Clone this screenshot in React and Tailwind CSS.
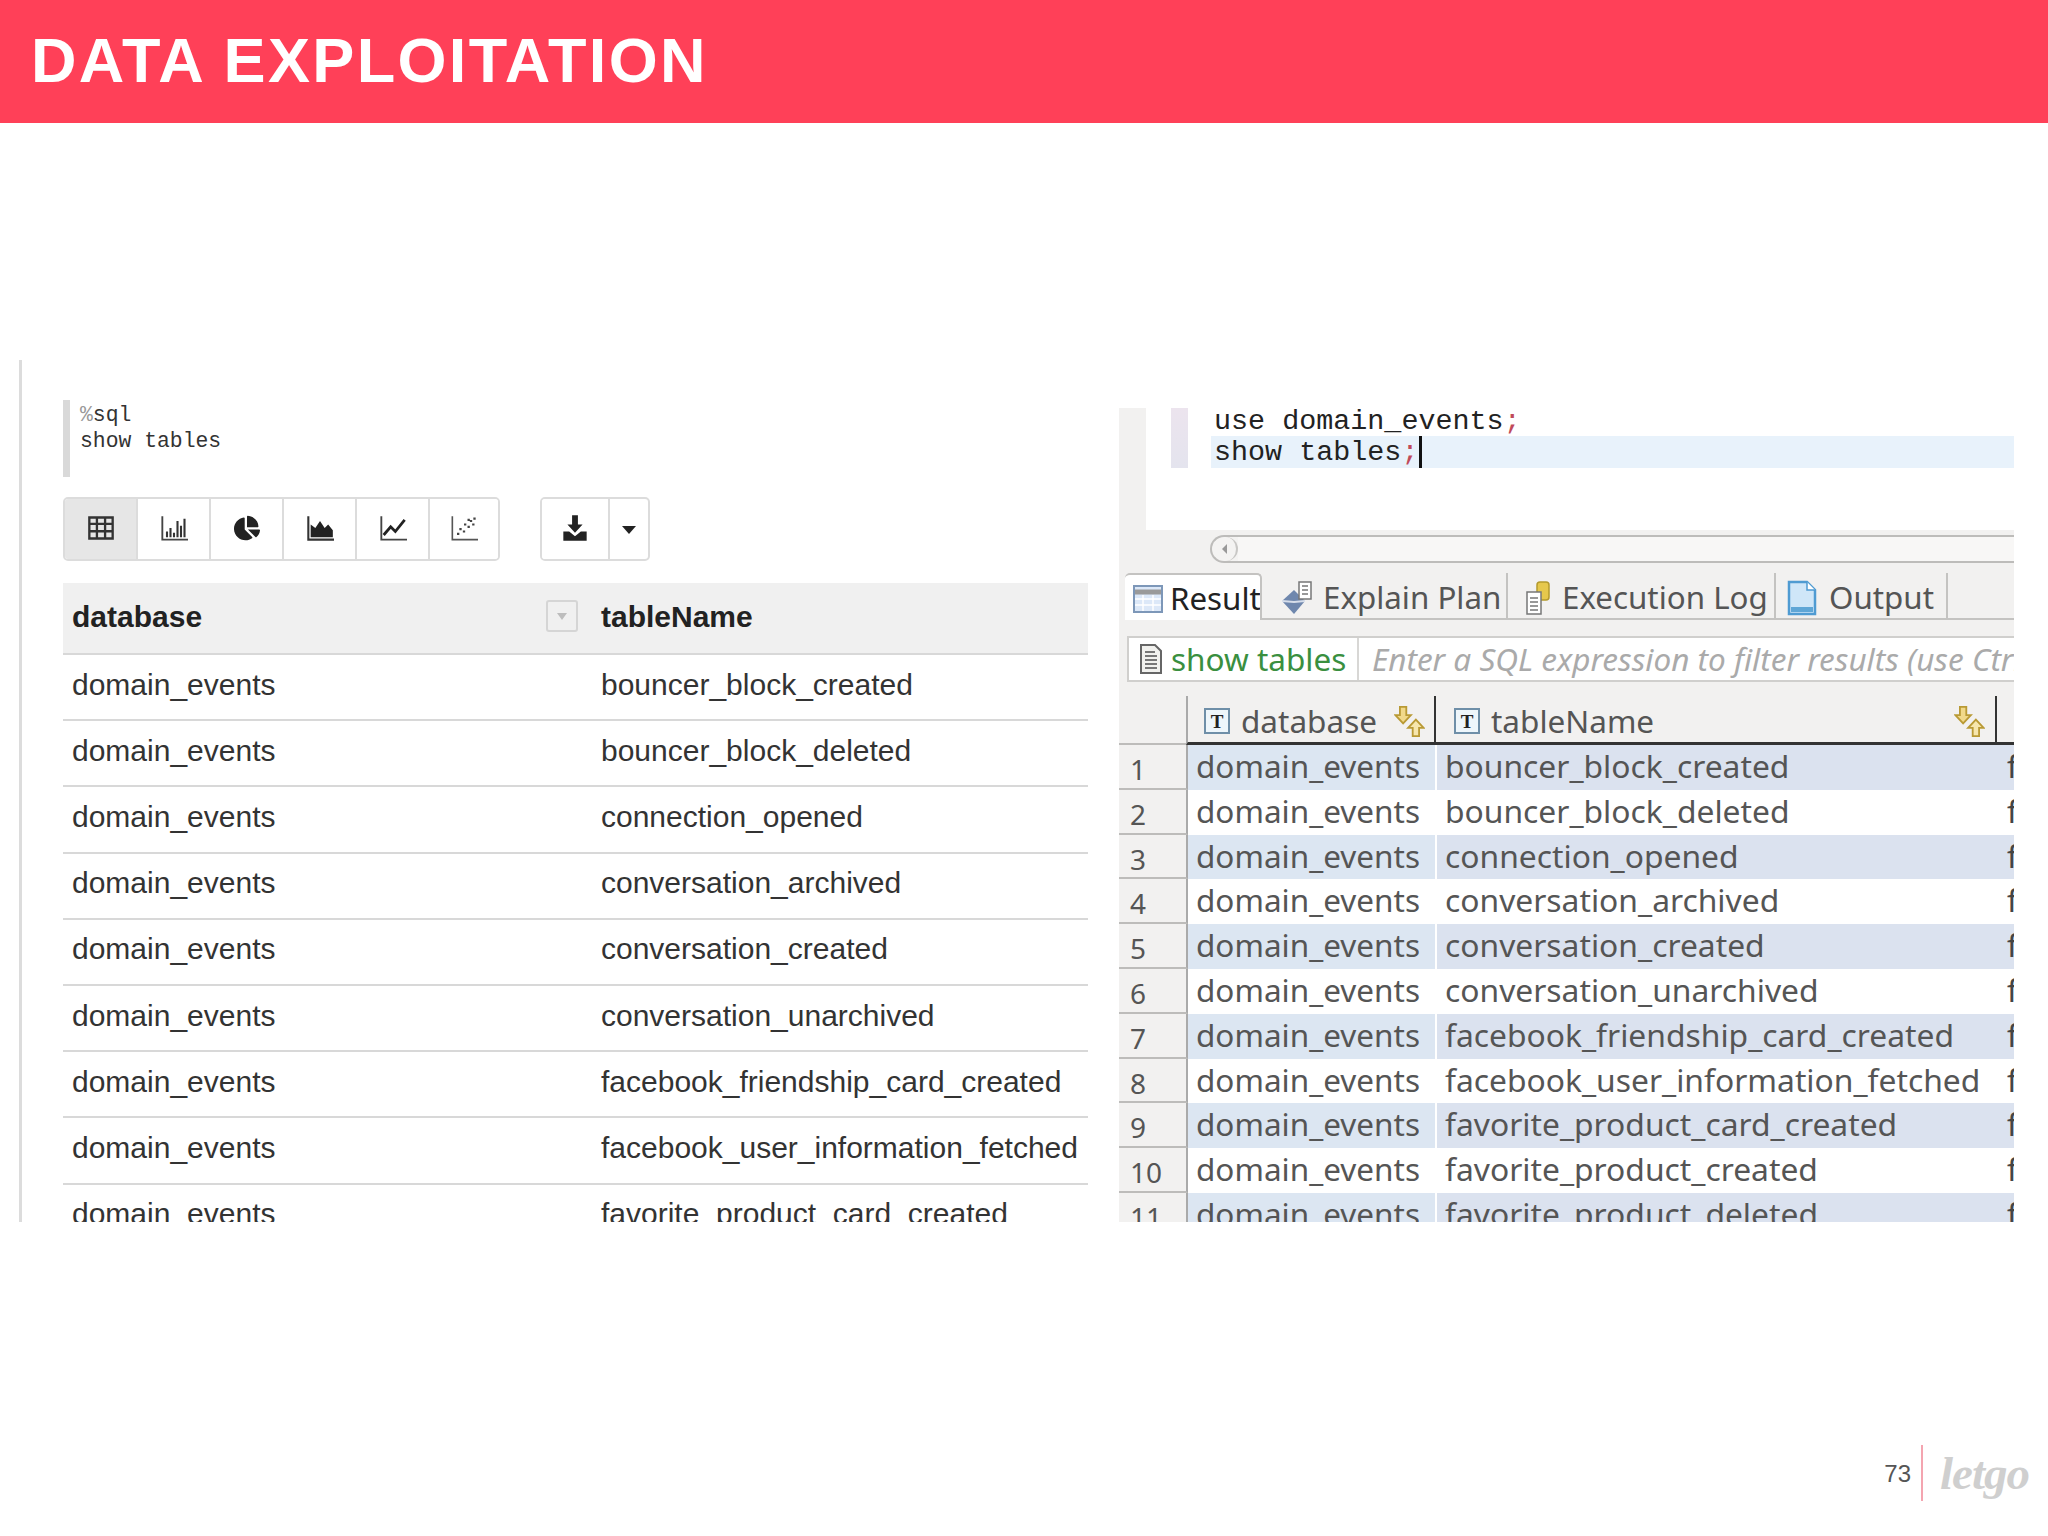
import React from "react";
import { FaChartPie } from "react-icons/fa";

const tables = ["bouncer_block_created","bouncer_block_deleted","connection_opened","conversation_archived","conversation_created","conversation_unarchived","facebook_friendship_card_created","facebook_user_information_fetched","favorite_product_card_created"];
const tablesR = [...tables, "favorite_product_created", "favorite_product_deleted"];

const S = ({ children, w = 28, h = 28, vb = "0 0 24 24" }) => (
  <svg width={w} height={h} viewBox={vb} className="shrink-0">{children}</svg>
);

const IconTable = () => (
  <S><path d="M2 3h20v18H2zM2 8.5h20M2 14.800h20M8.500 3v18M15.500 3v18" fill="none" stroke="#333" strokeWidth="2" /></S>
);
const IconBars = () => (
  <S><path d="M2 2v20h22" fill="none" stroke="#444" strokeWidth="1.600" /><path d="M6 15v5M9 12v8M12 16v4M15 6v14M18 10v10M21 4v16" stroke="#333" strokeWidth="1.800" /></S>
);
const IconArea = () => (
  <S><path d="M2 2v20h22" fill="none" stroke="#333" strokeWidth="1.800" /><path d="M4 20V9l4 3 4-6 4 6 3-3 4 5v6z" fill="#222" /></S>
);
const IconLine = () => (
  <S><path d="M2 2v20h22" fill="none" stroke="#444" strokeWidth="1.600" /><path d="M4 18l6-7 4 4 8-10" fill="none" stroke="#222" strokeWidth="2.400" /></S>
);
const IconScatter = () => (
  <S><path d="M2 2v20h22" fill="none" stroke="#555" strokeWidth="1.400" /><path d="M6 17h2M8 13h2M11 15h2M12 9h2M15 11h2M17 6h2M20 4h2M15 5h2M19 9h2" stroke="#444" strokeWidth="1.800" /></S>
);
const IconDownload = () => (
  <S><path d="M9.500 1h5v8h4L12 16 5.500 9h4z" fill="#222" /><path d="M2 15h5l5 4 5-4h5v8H2z" fill="#222" /></S>
);

const ToolBtn = ({ active, children, last, w = "w-[73px]" }) => (
  <div className={`${w} h-full flex items-center justify-center pb-[2px] ${active ? "bg-[#e6e6e6]" : "bg-white"} ${last ? "flex-1" : "border-r-2 border-[#dcdcdc]"}`}>
    {children}
  </div>
);

const ResultIcon = () => (
  <S w={30} h={30} vb="0 0 30 30">
    <rect x="1" y="2" width="28" height="26" fill="#dce8f8" stroke="#7d97b8" strokeWidth="2" />
    <path d="M2 8h26" stroke="#9a9a9a" strokeWidth="5" />
    <path d="M2 15h26M2 21h26M10 11v16M20 11v16" stroke="#fff" strokeWidth="1.500" />
  </S>
);
const PlanIcon = () => (
  <S w={32} h={34} vb="0 0 32 34">
    <path d="M1 20L13 9l11 11-11 13z" fill="#6f87ad" />
    <path d="M1 20l12 1 11-1" stroke="#d7deea" strokeWidth="2" fill="none" />
    <rect x="18" y="1" width="12" height="17" fill="#fff" stroke="#777" strokeWidth="1.500" />
    <path d="M21 5h6M21 9h6M21 13h6" stroke="#777" strokeWidth="1.500" />
  </S>
);
const LogIcon = () => (
  <S w={26} h={34} vb="0 0 26 34">
    <rect x="12" y="1" width="12" height="18" rx="3" fill="#e6c84c" stroke="#b49a2d" strokeWidth="1.500" />
    <rect x="2" y="11" width="14" height="22" fill="#fff" stroke="#777" strokeWidth="1.500" />
    <path d="M5 17h8M5 21h8M5 25h8M5 29h8" stroke="#777" strokeWidth="1.500" />
  </S>
);
const OutputIcon = () => (
  <S w={30} h={36} vb="0 0 30 36">
    <path d="M2 2h18l8 8v24H2z" fill="#cfe6f8" stroke="#4f9bd2" strokeWidth="2.500" />
    <path d="M4 27h22v5H4z" fill="#5fa6d6" />
    <path d="M20 2v8h8" fill="#fff" stroke="#4f9bd2" strokeWidth="1.500" />
  </S>
);
const DocIcon = () => (
  <S w={24} h={30} vb="0 0 24 30">
    <path d="M2 1h14l6 6v22H2z" fill="#f1f1ee" stroke="#666" strokeWidth="2" />
    <path d="M6 8h10M6 12h12M6 16h12M6 20h12M6 24h12" stroke="#777" strokeWidth="1.800" />
  </S>
);
const TIcon = () => (
  <div className="w-[26px] h-[26px] shrink-0 border-2 border-[#6f8fa8] bg-[#eef6fb] flex items-center justify-center text-[#222] text-[19px] font-bold font-['Liberation_Serif',serif] leading-none">
    T
  </div>
);
const SortIcon = () => (
  <S w={31} h={31} vb="0 0 33 34">
    <path d="M6 1h7v9h5l-8.500 9L1 10h5z" fill="#f1d98a" stroke="#b99a35" strokeWidth="2" />
    <path d="M20 33v-9h-5l8.500-9L32 24h-5v9z" fill="#f6e6ad" stroke="#b99a35" strokeWidth="2" />
  </S>
);

const Tab = ({ icon, label, cls }) => (
  <div className={`h-full flex items-center border-b-2 border-r-2 border-[#c4c3c1] pt-[4px] whitespace-nowrap ${cls}`}>
    {icon}
    <span className="text-[#555] text-[31.300px] leading-none">{label}</span>
  </div>
);

export default function App() {
  return (
    <div className="w-[2048px] h-[1536px] bg-white overflow-hidden flex flex-col font-['Liberation_Sans',sans-serif]">
      <header className="h-[123px] bg-[#ff4058] flex items-center pl-[31px] shrink-0">
        <h1 className="text-white font-bold text-[63px] leading-none tracking-[2.350px] pb-[2px]">DATA EXPLOITATION</h1>
      </header>

      <main className="mt-[237px] h-[862px] flex shrink-0">
        {/* Left notebook */}
        <section className="ml-[19px] w-[1069px] border-l-[3px] border-[#dcdcdc] overflow-hidden pl-[41px] pt-[40px]">
          <div className="h-[77px] border-l-[7px] border-[#d9d9d9] pl-[10px] pt-[2px] font-['Liberation_Mono',monospace] text-[21.400px] leading-[26px] text-[#333]">
            <div><span className="text-[#999]">%</span>sql</div>
            <div>show tables</div>
          </div>
          <div className="mt-[20px] flex h-[64px] gap-[40px]">
            <div className="w-[437px] flex border-2 border-[#dcdcdc] rounded-[5px] overflow-hidden">
              <ToolBtn active><IconTable /></ToolBtn>
              <ToolBtn><IconBars /></ToolBtn>
              <ToolBtn><FaChartPie size={26} color="#222" /></ToolBtn>
              <ToolBtn><IconArea /></ToolBtn>
              <ToolBtn><IconLine /></ToolBtn>
              <ToolBtn last w=""><IconScatter /></ToolBtn>
            </div>
            <div className="w-[110px] flex border-2 border-[#dcdcdc] rounded-[5px] overflow-hidden">
              <ToolBtn w="w-[68px]"><IconDownload /></ToolBtn>
              <div className="flex-1 flex items-center justify-center">
                <div className="w-0 h-0 border-l-[7px] border-r-[7px] border-t-[8px] border-l-transparent border-r-transparent border-t-[#222] mt-[2px]" />
              </div>
            </div>
          </div>
          <div className="mt-[22px] w-[1025px]">
            <div className="h-[72px] bg-[#f0f0f0] border-b-2 border-[#d8d8d8] flex items-center text-[#222] font-bold text-[30px] pb-[4px]">
              <div className="w-[538px] pl-[9px] flex items-center justify-between pr-[23px]">
                <span>database</span>
                <span className="w-[32px] h-[32px] border-2 border-[#d5d5d5] rounded-[3px] flex items-center justify-center">
                  <span className="w-0 h-0 border-l-[5px] border-r-[5px] border-t-[7px] border-l-transparent border-r-transparent border-t-[#bdbdbd]" />
                </span>
              </div>
              <div>tableName</div>
            </div>
            {tables.map((t) => (
              <div key={t} className="h-[66.200px] border-b-2 border-[#d8d8d8] flex items-center text-[#333] text-[30px] pb-[6px]">
                <div className="w-[538px] pl-[9px]">domain_events</div>
                <div>{t}</div>
              </div>
            ))}
          </div>
        </section>

        {/* Right SQL client */}
        <section className="ml-[31px] mt-[48px] w-[895px] h-[814px] bg-[#f2f1f0] overflow-hidden font-['Noto_Sans',sans-serif] text-[#555]">
          <div className="h-[122px] pl-[27px]">
            <div className="h-full bg-white pl-[25px] flex">
              <div className="w-[17px] h-[60px] bg-gradient-to-b from-[#ece4ee] to-[#e4e4ee]" />
              <div className="ml-[23px] flex-1 font-['Liberation_Mono',monospace] text-[28.400px] text-[#222]">
                <div className="h-[28px] leading-[28px] pl-[3px]">use domain_events<span className="text-[#c04a5a]">;</span></div>
                <div className="h-[32px] leading-[34px] bg-[#e8f2fb] flex pl-[3px]">
                  show tables<span className="text-[#c04a5a]">;</span>
                  <span className="w-[3px] h-[32px] bg-[#111] ml-[1px]" />
                </div>
              </div>
            </div>
          </div>
          <div className="mt-[5px] ml-[91px] h-[28px] flex border-y-2 border-[#bdbcba] rounded-l-[14px] border-l-2 bg-[#f4f3f2]">
            <div className="w-[26px] flex items-center justify-center border-r-2 border-[#c8c7c5] rounded-r-[12px]">
              <span className="w-0 h-0 border-t-[5px] border-b-[5px] border-r-[5px] border-t-transparent border-b-transparent border-r-[#999]" />
            </div>
            <div className="flex-1 bg-[#f8f7f6]" />
          </div>

          <div className="mt-[10px] h-[47px] flex">
            <div className="w-[6px]" />
            <div className="w-[137px] h-full bg-white rounded-t-[5px] border-t-2 border-r-2 border-[#c4c3c1] flex items-center pl-[8px] gap-[7px] pt-[3px] overflow-hidden">
              <ResultIcon />
              <span className="text-[#222] text-[31.300px] leading-none">Result</span>
            </div>
            <Tab cls="w-[246px] pl-[19px] gap-[10px]" icon={<PlanIcon />} label="Explain Plan" />
            <Tab cls="w-[268px] pl-[17px] gap-[11px]" icon={<LogIcon />} label="Execution Log" />
            <Tab cls="w-[172px] pl-[11px] gap-[12px]" icon={<OutputIcon />} label="Output" />
            <div className="flex-1 border-b-2 border-[#c4c3c1]" />
          </div>

          <div className="mt-[16px] ml-[8px] h-[46px] bg-white border-2 border-r-0 border-[#d0cfcd] flex items-center whitespace-nowrap overflow-hidden">
            <div className="ml-[10px]"><DocIcon /></div>
            <span className="ml-[8px] text-[#3a8f3f] text-[31.500px] leading-none w-[186px] shrink-0">show tables</span>
            <div className="w-[2px] h-full shrink-0 bg-[#d8d7d5]" />
            <span className="ml-[13px] text-[#aaa] italic text-[31.500px] leading-none">Enter a SQL expression to filter results (use Ctrl+Space)</span>
          </div>

          <div className="mt-[14px] h-[49px] flex">
            <div className="w-[67px] border-b-2 border-[#bdbcba]" />
            <div className="w-[250px] border-l-2 border-[#aaa] border-r-2 border-r-[#333] border-b-[3px] border-b-[#333] flex items-center pl-[16px] pt-[4px]">
              <TIcon />
              <span className="ml-[11px] text-[31.500px] leading-none text-[#555]">database</span>
              <span className="ml-[17px]"><SortIcon /></span>
            </div>
            <div className="w-[561px] border-r-2 border-[#333] border-b-[3px] border-b-[#333] flex items-center pl-[18px] pt-[4px]">
              <TIcon />
              <span className="ml-[11px] text-[31.500px] leading-none text-[#555] flex-1">tableName</span>
              <span className="mr-[10px]"><SortIcon /></span>
            </div>
            <div className="flex-1 border-b-[3px] border-[#333]" />
          </div>

          {tablesR.map((t, i) => (
            <div key={t} className={`h-[44.800px] flex ${i % 2 === 0 ? "bg-[#dbe2ef]" : "bg-white"}`}>
              <div className="w-[69px] bg-[#f2f1f0] border-r-2 border-b-2 border-r-[#aaa] border-b-[#bdbcba] pl-[11px] pt-[5px] text-[28px] leading-[38px] text-[#555]">{i + 1}</div>
              <div className={`w-[249px] pl-[8px] pt-[2px] text-[31.500px] leading-[38px] whitespace-nowrap border-r-2 border-white overflow-hidden ${i % 2 === 0 ? "bg-[#dce6f2]" : ""}`}>domain_events</div>
              <div className="w-[561px] pl-[8px] pt-[2px] text-[31.800px] leading-[38px] whitespace-nowrap">{t}</div>
              <div className="flex-1 overflow-hidden pl-[9px] pt-[2px] text-[31.500px] leading-[38px] text-[#444]">f</div>
            </div>
          ))}
        </section>
      </main>

      <footer className="mt-[223px] h-[56px] flex items-center justify-end pr-[16px]">
        <span className="text-[#555] text-[24px] leading-none pt-[2px]">73</span>
        <div className="ml-[10px] w-[2px] h-[56px] bg-[#f4a5b0]" />
        <span className="ml-[17px] w-[92px] text-[#cfcfcf] font-['Liberation_Serif',serif] italic font-bold text-[47px] leading-none tracking-[-1px]">letgo</span>
      </footer>
    </div>
  );
}
